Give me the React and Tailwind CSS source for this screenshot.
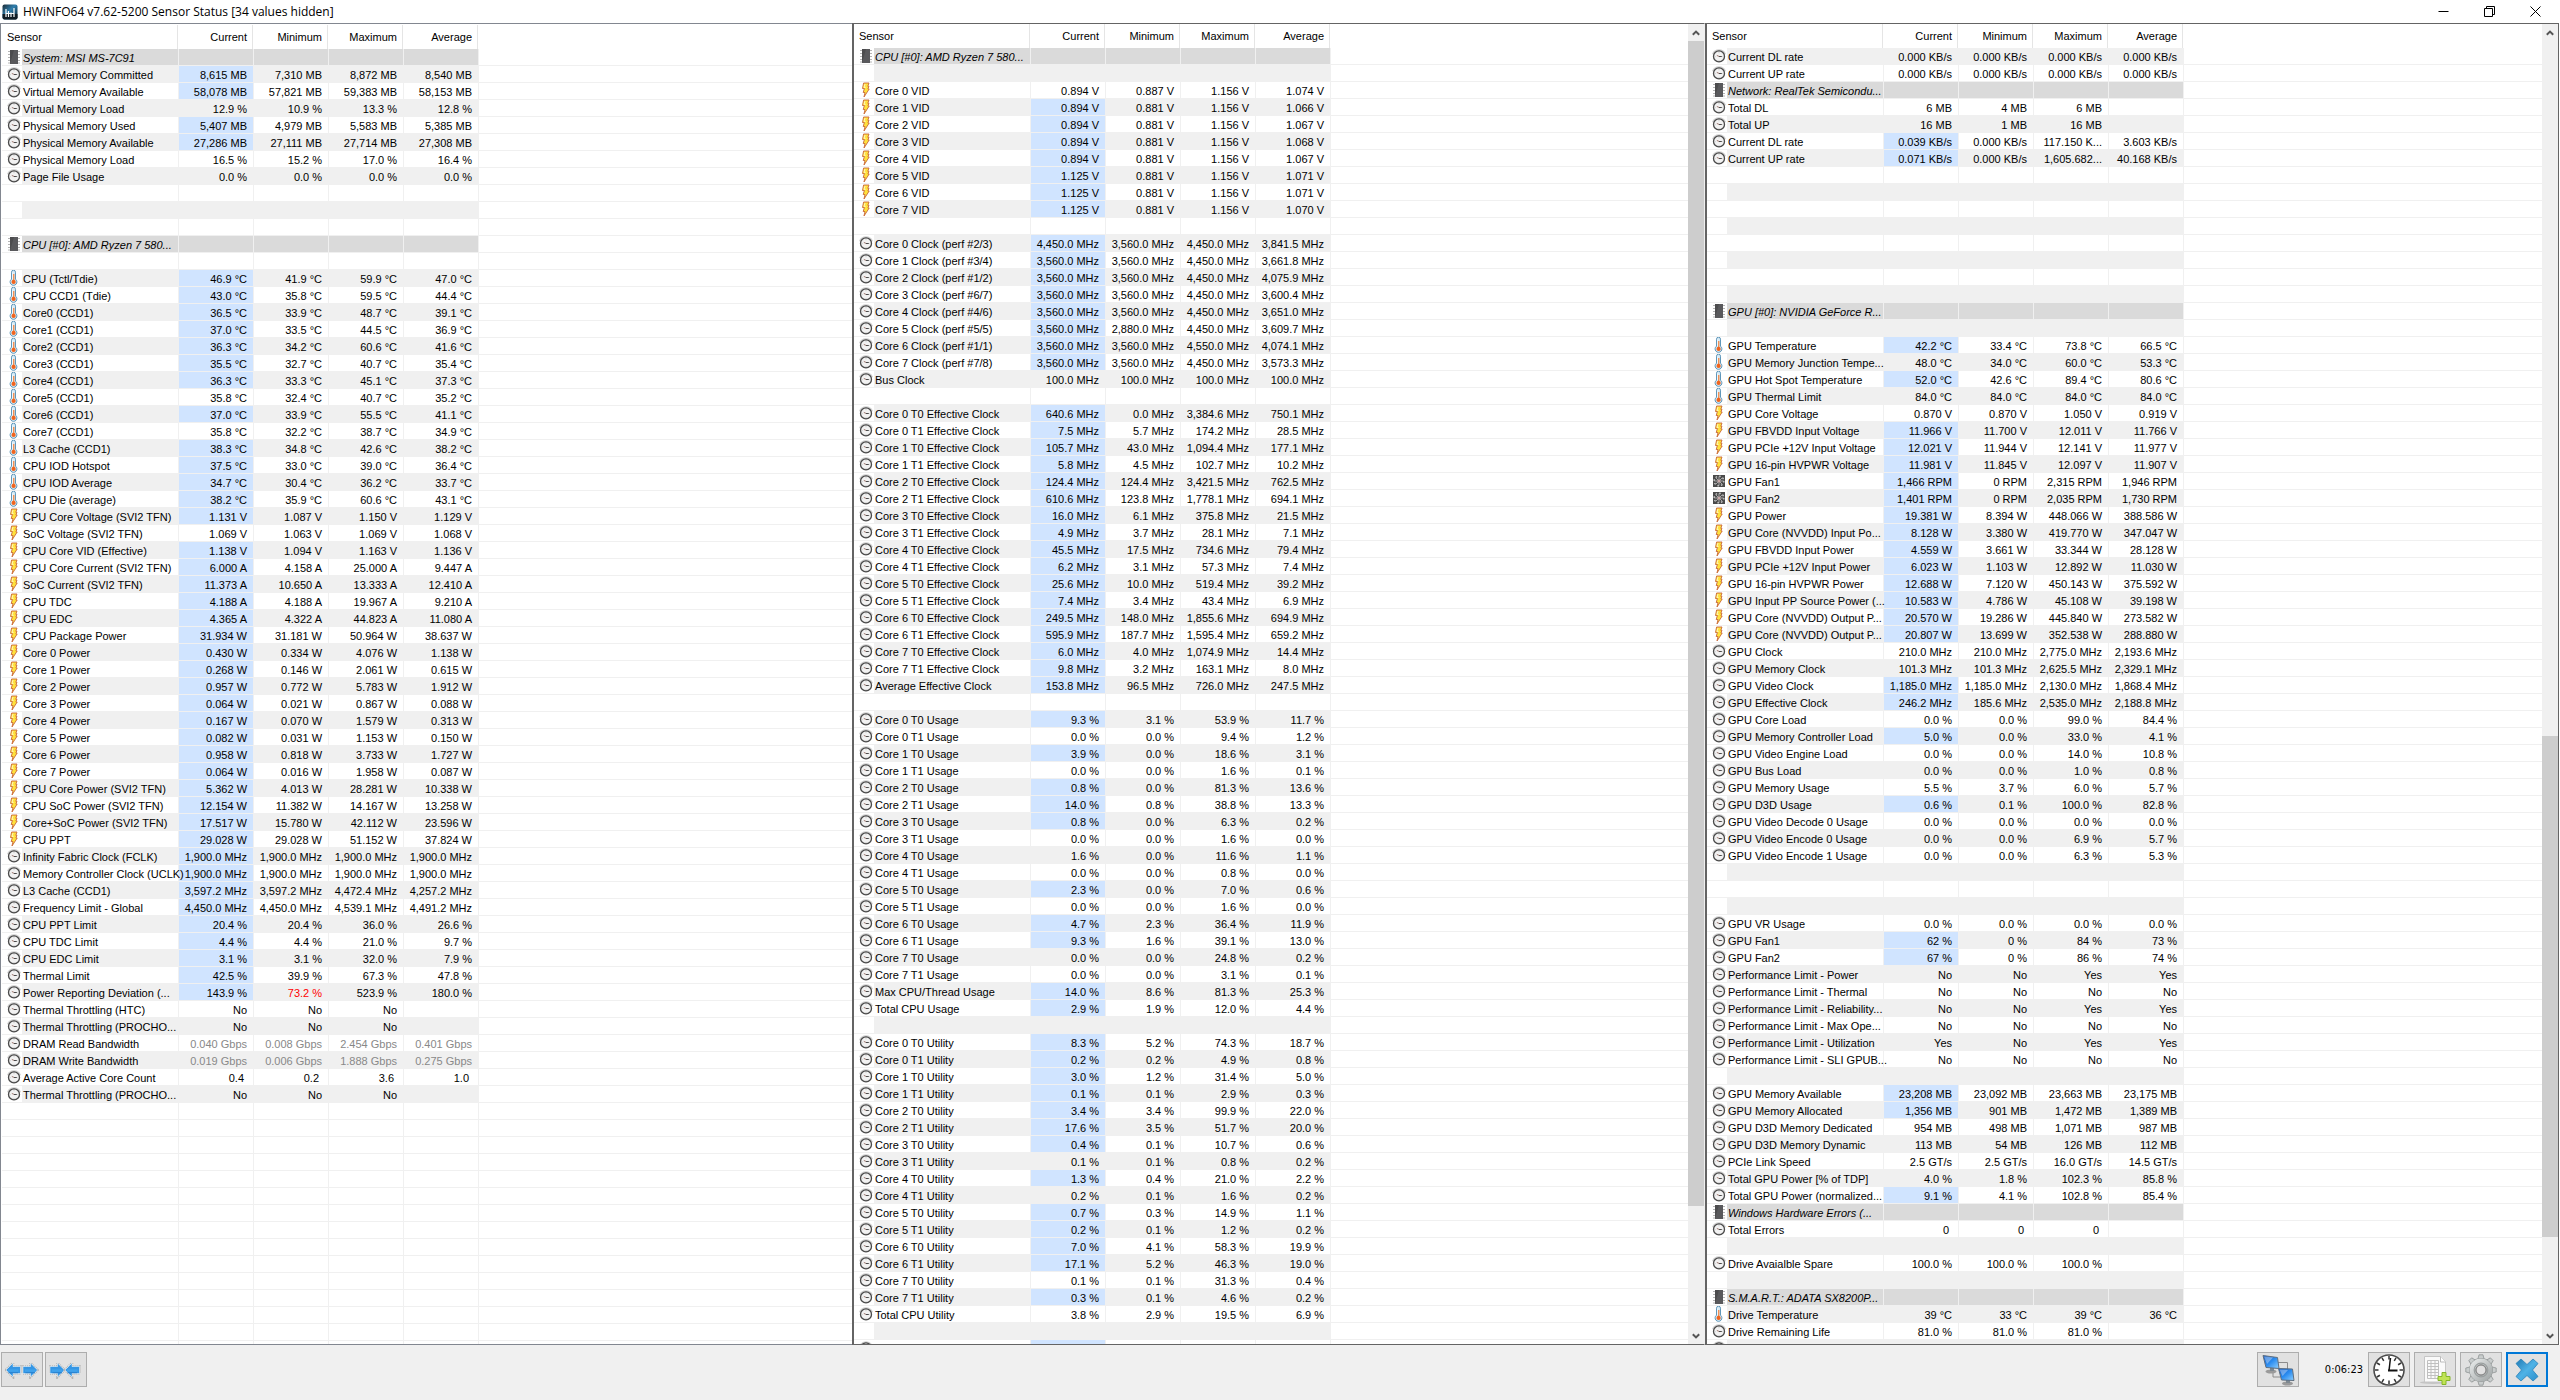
import React from "react";

const SYSTEM_PANE = `
#|System: MSI MS-7C91
c|Virtual Memory Committed|*8,615 MB|7,310 MB|8,872 MB|8,540 MB
c|Virtual Memory Available|*58,078 MB|57,821 MB|59,383 MB|58,153 MB
c|Virtual Memory Load|12.9 %|10.9 %|13.3 %|12.8 %
c|Physical Memory Used|*5,407 MB|4,979 MB|5,583 MB|5,385 MB
c|Physical Memory Available|*27,286 MB|27,111 MB|27,714 MB|27,308 MB
c|Physical Memory Load|16.5 %|15.2 %|17.0 %|16.4 %
c|Page File Usage|0.0 %|0.0 %|0.0 %|0.0 %
-
-
-
#|CPU [#0]: AMD Ryzen 7 580...
-
t|CPU (Tctl/Tdie)|*46.9 °C|41.9 °C|59.9 °C|47.0 °C
t|CPU CCD1 (Tdie)|*43.0 °C|35.8 °C|59.5 °C|44.4 °C
t|Core0 (CCD1)|*36.5 °C|33.9 °C|48.7 °C|39.1 °C
t|Core1 (CCD1)|*37.0 °C|33.5 °C|44.5 °C|36.9 °C
t|Core2 (CCD1)|*36.3 °C|34.2 °C|60.6 °C|41.6 °C
t|Core3 (CCD1)|*35.5 °C|32.7 °C|40.7 °C|35.4 °C
t|Core4 (CCD1)|*36.3 °C|33.3 °C|45.1 °C|37.3 °C
t|Core5 (CCD1)|35.8 °C|32.4 °C|40.7 °C|35.2 °C
t|Core6 (CCD1)|*37.0 °C|33.9 °C|55.5 °C|41.1 °C
t|Core7 (CCD1)|35.8 °C|32.2 °C|38.7 °C|34.9 °C
t|L3 Cache (CCD1)|*38.3 °C|34.8 °C|42.6 °C|38.2 °C
t|CPU IOD Hotspot|*37.5 °C|33.0 °C|39.0 °C|36.4 °C
t|CPU IOD Average|*34.7 °C|30.4 °C|36.2 °C|33.7 °C
t|CPU Die (average)|*38.2 °C|35.9 °C|60.6 °C|43.1 °C
v|CPU Core Voltage (SVI2 TFN)|*1.131 V|1.087 V|1.150 V|1.129 V
v|SoC Voltage (SVI2 TFN)|1.069 V|1.063 V|1.069 V|1.068 V
v|CPU Core VID (Effective)|*1.138 V|1.094 V|1.163 V|1.136 V
v|CPU Core Current (SVI2 TFN)|*6.000 A|4.158 A|25.000 A|9.447 A
v|SoC Current (SVI2 TFN)|*11.373 A|10.650 A|13.333 A|12.410 A
v|CPU TDC|*4.188 A|4.188 A|19.967 A|9.210 A
v|CPU EDC|*4.365 A|4.322 A|44.823 A|11.080 A
v|CPU Package Power|*31.934 W|31.181 W|50.964 W|38.637 W
v|Core 0 Power|*0.430 W|0.334 W|4.076 W|1.138 W
v|Core 1 Power|*0.268 W|0.146 W|2.061 W|0.615 W
v|Core 2 Power|*0.957 W|0.772 W|5.783 W|1.912 W
v|Core 3 Power|*0.064 W|0.021 W|0.867 W|0.088 W
v|Core 4 Power|*0.167 W|0.070 W|1.579 W|0.313 W
v|Core 5 Power|*0.082 W|0.031 W|1.153 W|0.150 W
v|Core 6 Power|*0.958 W|0.818 W|3.733 W|1.727 W
v|Core 7 Power|*0.064 W|0.016 W|1.958 W|0.087 W
v|CPU Core Power (SVI2 TFN)|*5.362 W|4.013 W|28.281 W|10.338 W
v|CPU SoC Power (SVI2 TFN)|*12.154 W|11.382 W|14.167 W|13.258 W
v|Core+SoC Power (SVI2 TFN)|*17.517 W|15.780 W|42.112 W|23.596 W
v|CPU PPT|*29.028 W|29.028 W|51.152 W|37.824 W
c|Infinity Fabric Clock (FCLK)|*1,900.0 MHz|1,900.0 MHz|1,900.0 MHz|1,900.0 MHz
c|Memory Controller Clock (UCLK)|*1,900.0 MHz|1,900.0 MHz|1,900.0 MHz|1,900.0 MHz
c|L3 Cache (CCD1)|*3,597.2 MHz|3,597.2 MHz|4,472.4 MHz|4,257.2 MHz
c|Frequency Limit - Global|*4,450.0 MHz|4,450.0 MHz|4,539.1 MHz|4,491.2 MHz
c|CPU PPT Limit|*20.4 %|20.4 %|36.0 %|26.6 %
c|CPU TDC Limit|*4.4 %|4.4 %|21.0 %|9.7 %
c|CPU EDC Limit|*3.1 %|3.1 %|32.0 %|7.9 %
c|Thermal Limit|*42.5 %|39.9 %|67.3 %|47.8 %
c|Power Reporting Deviation (...|*143.9 %|!73.2 %|523.9 %|180.0 %
c|Thermal Throttling (HTC)|No|No|No|
c|Thermal Throttling (PROCHO...|No|No|No|
c|DRAM Read Bandwidth|~0.040 Gbps|~0.008 Gbps|~2.454 Gbps|~0.401 Gbps
c|DRAM Write Bandwidth|~0.019 Gbps|~0.006 Gbps|~1.888 Gbps|~0.275 Gbps
c|Average Active Core Count|_0.4|_0.2|_3.6|_1.0
c|Thermal Throttling (PROCHO...|No|No|No|`;

const CPU_PANE = `
#|CPU [#0]: AMD Ryzen 7 580...
-
v|Core 0 VID|0.894 V|0.887 V|1.156 V|1.074 V
v|Core 1 VID|*0.894 V|0.881 V|1.156 V|1.066 V
v|Core 2 VID|*0.894 V|0.881 V|1.156 V|1.067 V
v|Core 3 VID|*0.894 V|0.881 V|1.156 V|1.068 V
v|Core 4 VID|*0.894 V|0.881 V|1.156 V|1.067 V
v|Core 5 VID|*1.125 V|0.881 V|1.156 V|1.071 V
v|Core 6 VID|*1.125 V|0.881 V|1.156 V|1.071 V
v|Core 7 VID|*1.125 V|0.881 V|1.156 V|1.070 V
-
c|Core 0 Clock (perf #2/3)|*4,450.0 MHz|3,560.0 MHz|4,450.0 MHz|3,841.5 MHz
c|Core 1 Clock (perf #3/4)|*3,560.0 MHz|3,560.0 MHz|4,450.0 MHz|3,661.8 MHz
c|Core 2 Clock (perf #1/2)|*3,560.0 MHz|3,560.0 MHz|4,450.0 MHz|4,075.9 MHz
c|Core 3 Clock (perf #6/7)|*3,560.0 MHz|3,560.0 MHz|4,450.0 MHz|3,600.4 MHz
c|Core 4 Clock (perf #4/6)|*3,560.0 MHz|3,560.0 MHz|4,450.0 MHz|3,651.0 MHz
c|Core 5 Clock (perf #5/5)|*3,560.0 MHz|2,880.0 MHz|4,450.0 MHz|3,609.7 MHz
c|Core 6 Clock (perf #1/1)|*3,560.0 MHz|3,560.0 MHz|4,550.0 MHz|4,074.1 MHz
c|Core 7 Clock (perf #7/8)|*3,560.0 MHz|3,560.0 MHz|4,450.0 MHz|3,573.3 MHz
c|Bus Clock|100.0 MHz|100.0 MHz|100.0 MHz|100.0 MHz
-
c|Core 0 T0 Effective Clock|*640.6 MHz|0.0 MHz|3,384.6 MHz|750.1 MHz
c|Core 0 T1 Effective Clock|*7.5 MHz|5.7 MHz|174.2 MHz|28.5 MHz
c|Core 1 T0 Effective Clock|*105.7 MHz|43.0 MHz|1,094.4 MHz|177.1 MHz
c|Core 1 T1 Effective Clock|*5.8 MHz|4.5 MHz|102.7 MHz|10.2 MHz
c|Core 2 T0 Effective Clock|*124.4 MHz|124.4 MHz|3,421.5 MHz|762.5 MHz
c|Core 2 T1 Effective Clock|*610.6 MHz|123.8 MHz|1,778.1 MHz|694.1 MHz
c|Core 3 T0 Effective Clock|*16.0 MHz|6.1 MHz|375.8 MHz|21.5 MHz
c|Core 3 T1 Effective Clock|*4.9 MHz|3.7 MHz|28.1 MHz|7.1 MHz
c|Core 4 T0 Effective Clock|*45.5 MHz|17.5 MHz|734.6 MHz|79.4 MHz
c|Core 4 T1 Effective Clock|*6.2 MHz|3.1 MHz|57.3 MHz|7.4 MHz
c|Core 5 T0 Effective Clock|*25.6 MHz|10.0 MHz|519.4 MHz|39.2 MHz
c|Core 5 T1 Effective Clock|*7.4 MHz|3.4 MHz|43.4 MHz|6.9 MHz
c|Core 6 T0 Effective Clock|*249.5 MHz|148.0 MHz|1,855.6 MHz|694.9 MHz
c|Core 6 T1 Effective Clock|*595.9 MHz|187.7 MHz|1,595.4 MHz|659.2 MHz
c|Core 7 T0 Effective Clock|*6.0 MHz|4.0 MHz|1,074.9 MHz|14.4 MHz
c|Core 7 T1 Effective Clock|*9.8 MHz|3.2 MHz|163.1 MHz|8.0 MHz
c|Average Effective Clock|*153.8 MHz|96.5 MHz|726.0 MHz|247.5 MHz
-
c|Core 0 T0 Usage|*9.3 %|3.1 %|53.9 %|11.7 %
c|Core 0 T1 Usage|0.0 %|0.0 %|9.4 %|1.2 %
c|Core 1 T0 Usage|*3.9 %|0.0 %|18.6 %|3.1 %
c|Core 1 T1 Usage|0.0 %|0.0 %|1.6 %|0.1 %
c|Core 2 T0 Usage|*0.8 %|0.0 %|81.3 %|13.6 %
c|Core 2 T1 Usage|*14.0 %|0.8 %|38.8 %|13.3 %
c|Core 3 T0 Usage|*0.8 %|0.0 %|6.3 %|0.2 %
c|Core 3 T1 Usage|0.0 %|0.0 %|1.6 %|0.0 %
c|Core 4 T0 Usage|1.6 %|0.0 %|11.6 %|1.1 %
c|Core 4 T1 Usage|0.0 %|0.0 %|0.8 %|0.0 %
c|Core 5 T0 Usage|*2.3 %|0.0 %|7.0 %|0.6 %
c|Core 5 T1 Usage|0.0 %|0.0 %|1.6 %|0.0 %
c|Core 6 T0 Usage|*4.7 %|2.3 %|36.4 %|11.9 %
c|Core 6 T1 Usage|*9.3 %|1.6 %|39.1 %|13.0 %
c|Core 7 T0 Usage|0.0 %|0.0 %|24.8 %|0.2 %
c|Core 7 T1 Usage|0.0 %|0.0 %|3.1 %|0.1 %
c|Max CPU/Thread Usage|*14.0 %|8.6 %|81.3 %|25.3 %
c|Total CPU Usage|*2.9 %|1.9 %|12.0 %|4.4 %
-
c|Core 0 T0 Utility|*8.3 %|5.2 %|74.3 %|18.7 %
c|Core 0 T1 Utility|*0.2 %|0.2 %|4.9 %|0.8 %
c|Core 1 T0 Utility|*3.0 %|1.2 %|31.4 %|5.0 %
c|Core 1 T1 Utility|*0.1 %|0.1 %|2.9 %|0.3 %
c|Core 2 T0 Utility|*3.4 %|3.4 %|99.9 %|22.0 %
c|Core 2 T1 Utility|*17.6 %|3.5 %|51.7 %|20.0 %
c|Core 3 T0 Utility|*0.4 %|0.1 %|10.7 %|0.6 %
c|Core 3 T1 Utility|0.1 %|0.1 %|0.8 %|0.2 %
c|Core 4 T0 Utility|*1.3 %|0.4 %|21.0 %|2.2 %
c|Core 4 T1 Utility|0.2 %|0.1 %|1.6 %|0.2 %
c|Core 5 T0 Utility|*0.7 %|0.3 %|14.9 %|1.1 %
c|Core 5 T1 Utility|*0.2 %|0.1 %|1.2 %|0.2 %
c|Core 6 T0 Utility|*7.0 %|4.1 %|58.3 %|19.9 %
c|Core 6 T1 Utility|*17.1 %|5.2 %|46.3 %|19.0 %
c|Core 7 T0 Utility|0.1 %|0.1 %|31.3 %|0.4 %
c|Core 7 T1 Utility|*0.3 %|0.1 %|4.6 %|0.2 %
c|Total CPU Utility|3.8 %|2.9 %|19.5 %|6.9 %
-
c||*|||`;

const GPU_PANE = `
c|Current DL rate|0.000 KB/s|0.000 KB/s|0.000 KB/s|0.000 KB/s
c|Current UP rate|0.000 KB/s|0.000 KB/s|0.000 KB/s|0.000 KB/s
#|Network: RealTek Semicondu...
c|Total DL|6 MB|4 MB|6 MB|
c|Total UP|16 MB|1 MB|16 MB|
c|Current DL rate|*0.039 KB/s|0.000 KB/s|117.150 K...|3.603 KB/s
c|Current UP rate|*0.071 KB/s|0.000 KB/s|1,605.682...|40.168 KB/s
-
-
-
-
-
-
-
-
#|GPU [#0]: NVIDIA GeForce R...
-
t|GPU Temperature|*42.2 °C|33.4 °C|73.8 °C|66.5 °C
t|GPU Memory Junction Tempe...|48.0 °C|34.0 °C|60.0 °C|53.3 °C
t|GPU Hot Spot Temperature|*52.0 °C|42.6 °C|89.4 °C|80.6 °C
t|GPU Thermal Limit|84.0 °C|84.0 °C|84.0 °C|84.0 °C
v|GPU Core Voltage|0.870 V|0.870 V|1.050 V|0.919 V
v|GPU FBVDD Input Voltage|*11.966 V|11.700 V|12.011 V|11.766 V
v|GPU PCIe +12V Input Voltage|*12.021 V|11.944 V|12.141 V|11.977 V
v|GPU 16-pin HVPWR Voltage|*11.981 V|11.845 V|12.097 V|11.907 V
f|GPU Fan1|*1,466 RPM|0 RPM|2,315 RPM|1,946 RPM
f|GPU Fan2|*1,401 RPM|0 RPM|2,035 RPM|1,730 RPM
v|GPU Power|*19.381 W|8.394 W|448.066 W|388.586 W
v|GPU Core (NVVDD) Input Po...|*8.128 W|3.380 W|419.770 W|347.047 W
v|GPU FBVDD Input Power|*4.559 W|3.661 W|33.344 W|28.128 W
v|GPU PCIe +12V Input Power|*6.023 W|1.103 W|12.892 W|11.030 W
v|GPU 16-pin HVPWR Power|*12.688 W|7.120 W|450.143 W|375.592 W
v|GPU Input PP Source Power (...|*10.583 W|4.786 W|45.108 W|39.198 W
v|GPU Core (NVVDD) Output P...|*20.570 W|19.286 W|445.840 W|273.582 W
v|GPU Core (NVVDD) Output P...|*20.807 W|13.699 W|352.538 W|288.880 W
c|GPU Clock|210.0 MHz|210.0 MHz|2,775.0 MHz|2,193.6 MHz
c|GPU Memory Clock|101.3 MHz|101.3 MHz|2,625.5 MHz|2,329.1 MHz
c|GPU Video Clock|*1,185.0 MHz|1,185.0 MHz|2,130.0 MHz|1,868.4 MHz
c|GPU Effective Clock|*246.2 MHz|185.6 MHz|2,535.0 MHz|2,188.8 MHz
c|GPU Core Load|0.0 %|0.0 %|99.0 %|84.4 %
c|GPU Memory Controller Load|*5.0 %|0.0 %|33.0 %|4.1 %
c|GPU Video Engine Load|0.0 %|0.0 %|14.0 %|10.8 %
c|GPU Bus Load|0.0 %|0.0 %|1.0 %|0.8 %
c|GPU Memory Usage|5.5 %|3.7 %|6.0 %|5.7 %
c|GPU D3D Usage|*0.6 %|0.1 %|100.0 %|82.8 %
c|GPU Video Decode 0 Usage|0.0 %|0.0 %|0.0 %|0.0 %
c|GPU Video Encode 0 Usage|0.0 %|0.0 %|6.9 %|5.7 %
c|GPU Video Encode 1 Usage|0.0 %|0.0 %|6.3 %|5.3 %
-
-
-
c|GPU VR Usage|0.0 %|0.0 %|0.0 %|0.0 %
c|GPU Fan1|*62 %|0 %|84 %|73 %
c|GPU Fan2|*67 %|0 %|86 %|74 %
c|Performance Limit - Power|No|No|Yes|Yes
c|Performance Limit - Thermal|No|No|No|No
c|Performance Limit - Reliability...|No|No|Yes|Yes
c|Performance Limit - Max Ope...|No|No|No|No
c|Performance Limit - Utilization|Yes|No|Yes|Yes
c|Performance Limit - SLI GPUB...|No|No|No|No
-
c|GPU Memory Available|*23,208 MB|23,092 MB|23,663 MB|23,175 MB
c|GPU Memory Allocated|*1,356 MB|901 MB|1,472 MB|1,389 MB
c|GPU D3D Memory Dedicated|954 MB|498 MB|1,071 MB|987 MB
c|GPU D3D Memory Dynamic|113 MB|54 MB|126 MB|112 MB
c|PCIe Link Speed|2.5 GT/s|2.5 GT/s|16.0 GT/s|14.5 GT/s
c|Total GPU Power [% of TDP]|4.0 %|1.8 %|102.3 %|85.8 %
c|Total GPU Power (normalized...|*9.1 %|4.1 %|102.8 %|85.4 %
#|Windows Hardware Errors (...
c|Total Errors|_0|_0|_0|
-
c|Drive Avaialble Spare|100.0 %|100.0 %|100.0 %|
-
#|S.M.A.R.T.: ADATA SX8200P...
t|Drive Temperature|39 °C|33 °C|39 °C|36 °C
c|Drive Remaining Life|81.0 %|81.0 %|81.0 %|
c|||||`;

const TOTAL_ROWS = 77;

function parseRows(source) {
  const rows = source.trim().split("\n").map((line) => {
    const [kind, name = "", ...values] = line.split("|");
    return { kind, name, values: [0, 1, 2, 3].map((i) => values[i] || "") };
  });
  const used = rows.length;
  while (rows.length < TOTAL_ROWS) rows.push({ kind: "-", name: "", values: ["", "", "", ""] });
  return { rows, used };
}

function ClockIcon() {
  return (
    <svg viewBox="0 0 16 16" className="block size-4" aria-hidden="true">
      <path d="M2.2 6.5A6.3 6.3 0 0 1 13.8 6.5" fill="none" stroke="#d0d0d0" strokeWidth="2.6" />
      <circle cx="8" cy="8.4" r="5.5" fill="#f2f2f2" stroke="#4a4a4a" strokeWidth="1.3" />
      <path d="M8 4.2v1M8 12v1M3.6 8.6h1M11.4 8.6h1" stroke="#bcbcbc" strokeWidth="0.8" />
      <path d="M5.8 7.4 8.2 8.5" stroke="#a07a72" strokeWidth="1" />
      <path d="M8 8.5h2.8" stroke="#4c4c4c" strokeWidth="1" />
    </svg>
  );
}

function ThermometerIcon() {
  return (
    <svg viewBox="0 0 16 16" className="block size-4" aria-hidden="true">
      <path d="M5.5 2.2a2 2 0 0 1 4 0v7a3.4 3.4 0 1 1-4 0z" fill="#d6eaf5" stroke="#5f97ba" strokeWidth="1" />
      <path d="M7 4h1.4v6H7z" fill="#f08a4a" />
      <circle cx="7.6" cy="11.9" r="2.1" fill="#f0641e" />
      <path d="M6.6 2.5v6.5" stroke="#fff" strokeWidth="0.7" />
    </svg>
  );
}

function BoltIcon() {
  return (
    <svg viewBox="0 0 16 16" className="block size-4" aria-hidden="true">
      <path d="M5.600 1H11L9.800 4.300H11L9.900 7h1.300L6 15 7 10.500H5.200L6.400 6.500H4.500z" fill="#ffe13c" stroke="#c8683a" strokeWidth="0.9" strokeLinejoin="miter" />
      <path d="M7 2 6 5.400h1.600" fill="none" stroke="#fff8c8" strokeWidth="0.9" />
    </svg>
  );
}

function ChipIcon() {
  return (
    <svg viewBox="0 0 16 16" className="block size-4" aria-hidden="true">
      <path d="M2 2.5h12M2 5.5h12M2 8.5h12M2 11.5h12M2 14h12" stroke="#b4b4b4" strokeWidth="1" />
      <rect x="4" y="1" width="8" height="14" fill="#4c4c4e" />
      <path d="M8 1h4v14H4z" fill="#636365" opacity="0.6" />
    </svg>
  );
}

function FanIcon() {
  return (
    <svg viewBox="0 0 16 16" className="block size-4" aria-hidden="true">
      <rect x="2" y="2" width="12" height="12" fill="#4a4a4a" />
      <circle cx="8" cy="8" r="4.8" fill="none" stroke="#c9c9c9" strokeWidth="1.4" strokeDasharray="1.6 2.1" />
      <path d="M4.6 4.6l6.8 6.8M11.4 4.6l-6.8 6.8M8 3.4v9.2M3.4 8h9.2" stroke="#b0b0b0" strokeWidth="0.9" />
      <circle cx="8" cy="8" r="1.5" fill="#c9a8a8" />
    </svg>
  );
}

const ICONS = { c: ClockIcon, t: ThermometerIcon, v: BoltIcon, "#": ChipIcon, f: FanIcon };

function ValueCell({ value, fill }) {
  const flag = "*!~_".includes(value[0]) ? value[0] : "";
  const text = flag ? value.slice(1) : value;
  const background = flag === "*" ? "bg-[#d0e4ff]" : fill;
  const color = flag === "!" ? "text-[#ff0000]" : flag === "~" ? "text-[#888888]" : "text-black";
  const padding = flag === "_" ? "pr-[9px]" : "pr-[6px]";
  return (
    <td className={`border-r border-b border-[#f0f0f0] pt-[2px] pb-0 pl-0 text-right ${background} ${color} ${padding}`}>{text}</td>
  );
}

function SensorRow({ row, striped }) {
  const Icon = ICONS[row.kind];
  const section = row.kind === "#";
  const fill = section ? "bg-[#dadada]" : striped ? "bg-[#f0f0f0]" : "bg-white";
  return (
    <tr className="h-[17px]">
      <td className="border-b border-[#f0f0f0] p-0 pl-1">{Icon ? <Icon /> : null}</td>
      <td className={`border-r border-b border-[#f0f0f0] pt-[2px] pr-0 pb-0 pl-px ${fill} ${section ? "italic" : ""}`}>{row.name}</td>
      {row.values.map((value, i) => (
        <ValueCell key={i} value={value} fill={fill} />
      ))}
      <td className="border-b border-[#f0f0f0] p-0" />
    </tr>
  );
}

function HeaderCell({ children, span }) {
  return (
    <th scope="col" colSpan={span || 1} className="p-0 pr-px font-normal">
      <div className={`h-6 border-r border-[#e5e5e5] leading-6 ${span ? "pl-[5px] text-left" : "pr-[5px] text-right"}`}>
        {children}
      </div>
    </th>
  );
}

function SensorTable({ source, stripe }) {
  const { rows, used } = parseRows(source);
  return (
    <table className="w-full table-fixed border-separate border-spacing-0 font-['Liberation_Sans',sans-serif] text-[11px] leading-[14px] whitespace-nowrap text-black">
      <colgroup>
        <col className="w-[20px]" />
        <col className="w-[157px]" />
        <col className="w-[75px]" />
        <col className="w-[75px]" />
        <col className="w-[75px]" />
        <col className="w-[75px]" />
        <col />
      </colgroup>
      <thead>
        <tr>
          <HeaderCell span={2}>Sensor</HeaderCell>
          <HeaderCell>Current</HeaderCell>
          <HeaderCell>Minimum</HeaderCell>
          <HeaderCell>Maximum</HeaderCell>
          <HeaderCell>Average</HeaderCell>
          <td />
        </tr>
      </thead>
      <tbody>
        {rows.map((row, i) => (
          <SensorRow key={i} row={row} striped={i < used && i % 2 === stripe} />
        ))}
      </tbody>
    </table>
  );
}

function Chevron({ up }) {
  return (
    <svg viewBox="0 0 8 8" className="size-2" aria-hidden="true">
      <path d={up ? "M0.8 5.8 4 2.6 7.2 5.8" : "M0.8 2.2 4 5.4 7.2 2.2"} fill="none" stroke="#555" strokeWidth="2" />
    </svg>
  );
}

function ScrollBar({ before, thumb, after }) {
  return (
    <div className="flex w-4 shrink-0 flex-col bg-[#f0f0f0]">
      <button type="button" aria-label="Scroll up" className="flex h-[17px] items-center justify-center">
        <Chevron up />
      </button>
      <div className="flex flex-1 flex-col">
        <div style={{ flexGrow: before }} />
        <div className="bg-[#cdcdcd]" style={{ flexGrow: thumb }} />
        <div style={{ flexGrow: after }} />
      </div>
      <button type="button" aria-label="Scroll down" className="flex h-[17px] items-center justify-center">
        <Chevron />
      </button>
    </div>
  );
}

function ToolButton({ label, primary, children }) {
  return (
    <button
      type="button"
      aria-label={label}
      className={`flex h-[35px] w-[42px] items-center justify-center bg-[#e1e1e1] ${primary ? "border-2 border-[#0078d7]" : "border border-[#adadad]"}`}
    >
      {children}
    </button>
  );
}

const LEFT_ARROW = "M0 8 7 1V4.500H14.500V11.500H7V15z";
const RIGHT_ARROW = "M14.500 8 7.500 1V4.500H0V11.500H7.500V15z";

function ArrowPair({ first, second, gap }) {
  return (
    <svg viewBox="0 0 34 18" className="h-[18px] w-[34px]" aria-hidden="true">
      {[[first, 1], [second, 16 + gap]].map(([path, x], i) => (
        <g key={i} transform={`translate(${x} 1)`}>
          <path d={path} fill="none" stroke="#b4b4b4" strokeWidth="2.600" strokeDasharray="1 1" />
          <path d={path} fill="#3596e4" stroke="#fafcff" strokeWidth="0.500" />
          <path d="M2 8.600h10.500" stroke="#3fa2ec" strokeWidth="2.500" />
          <path d="M2.500 10.700h9.500" stroke="#2b80cc" strokeWidth="1" />
        </g>
      ))}
    </svg>
  );
}

function NetworkIcon() {
  return (
    <svg viewBox="0 0 34 32" className="h-8 w-[34px]" aria-hidden="true">
      <defs>
        <linearGradient id="screen" x1="0" y1="0" x2="1" y2="1">
          <stop offset="0" stopColor="#0b55c4" />
          <stop offset="0.5" stopColor="#2b8cf0" />
          <stop offset="1" stopColor="#8fd0ff" />
        </linearGradient>
      </defs>
      <path d="M17 8.500h9.500v8M12 16v7h7" fill="none" stroke="#8c8c8c" />
      <ellipse cx="10" cy="17.500" rx="5.500" ry="2" fill="#9a9a9a" />
      <path d="M9 13h4v4H9z" fill="#7e8890" />
      <path d="M2 1.500 16.500 3.500 18 14.500 5 13.500z" fill="url(#screen)" stroke="#5f6f80" />
      <path d="M3 2.500 12 3.500 6 10z" fill="#fff" opacity="0.35" />
      <ellipse cx="26.500" cy="29.500" rx="5.500" ry="2" fill="#9a9a9a" />
      <path d="M25 25h4v4h-4z" fill="#7e8890" />
      <path d="M17.500 14.500 31.500 15 33 26.500 20.500 26z" fill="url(#screen)" stroke="#5f6f80" />
      <path d="M18.500 15.500 27 16 21.500 22z" fill="#fff" opacity="0.35" />
    </svg>
  );
}

function WallClockIcon() {
  return (
    <svg viewBox="0 0 32 32" className="size-8" aria-hidden="true">
      <circle cx="16" cy="16" r="15" fill="#fff" stroke="#4b4b4b" strokeWidth="1.6" />
      {[0, 30, 60, 90, 120, 150, 180, 210, 240, 270, 300, 330].map((angle) => (
        <path key={angle} d="M16 2v3.500" stroke="#333" strokeWidth="1.500" transform={`rotate(${angle} 16 16)`} />
      ))}
      <path d="M17.500 4 16 16.500" stroke="#111" strokeWidth="1.500" />
      <path d="M15 16.500h9.500" stroke="#111" strokeWidth="2" />
    </svg>
  );
}

function SheetIcon() {
  return (
    <svg viewBox="0 0 32 32" className="size-8" aria-hidden="true">
      <ellipse cx="14" cy="28.500" rx="13" ry="1.500" fill="#c4c4c4" />
      <path d="M5.500 2.500h16l5 5v20.500h-21z" fill="#fafafa" stroke="#c6c6c6" />
      <path d="M21.500 2.500v5.500h5" fill="#fff" stroke="#bbb" />
      <path d="M8.500 6.500h11v18h-11zM8.500 9.500h11M8.500 12.500h11M8.500 15.500h11M8.500 18.500h11M8.500 21.500h11M12 6.500v18M16 6.500v18" fill="none" stroke="#c0c0c0" />
      <path d="M23 18.500h4v4h4v4h-4v4h-4v-4h-4v-4h4z" fill="#c0e355" stroke="#84b52a" />
    </svg>
  );
}

function GearIcon() {
  return (
    <svg viewBox="0 0 32 32" className="size-8" aria-hidden="true">
      <defs>
        <linearGradient id="steel" x1="0" y1="0" x2="1" y2="1">
          <stop offset="0" stopColor="#e3e6e6" />
          <stop offset="1" stopColor="#a6abab" />
        </linearGradient>
      </defs>
      {[0, 45, 90, 135, 180, 225, 270, 315].map((angle) => (
        <path key={angle} d="M12.500 7 14 0.800h4L19.500 7z" fill="#c9cdcd" stroke="#8f9494" strokeWidth="0.8" transform={`rotate(${angle} 16 16)`} />
      ))}
      <circle cx="16" cy="16" r="8.600" fill="none" stroke="#8f9494" strokeWidth="6.600" />
      <circle cx="16" cy="16" r="8.600" fill="none" stroke="url(#steel)" strokeWidth="5.800" />
      <circle cx="16" cy="16" r="6.800" fill="none" stroke="#9a9f9f" strokeWidth="1.200" />
      <circle cx="16" cy="16" r="5" fill="#e1e1e1" stroke="#777" strokeWidth="1" />
    </svg>
  );
}

function CrossIcon() {
  return (
    <svg viewBox="0 0 24 24" className="size-6" aria-hidden="true">
      <defs>
        <linearGradient id="cross" x1="0" y1="0" x2="1" y2="1">
          <stop offset="0" stopColor="#1f7ab4" />
          <stop offset="0.5" stopColor="#4fb2e6" />
          <stop offset="1" stopColor="#2c8fcb" />
        </linearGradient>
      </defs>
      <path d="M6 1 12 6.500 18 1 23 5.500 17.500 12 23 18.500 18 23 12 17.500 6 23 1 18.500 6.500 12 1 5.500z" fill="url(#cross)" stroke="#2b83ba" strokeWidth="0.8" strokeLinejoin="round" />
    </svg>
  );
}

function AppIcon() {
  return (
    <svg viewBox="0 0 16 16" className="size-4" aria-hidden="true">
      <defs>
        <linearGradient id="logo" x1="0" y1="0" x2="1" y2="1">
          <stop offset="0" stopColor="#1d2a33" />
          <stop offset="0.45" stopColor="#2f7fae" />
          <stop offset="1" stopColor="#0a141b" />
        </linearGradient>
      </defs>
      <rect x="0.500" y="0.500" width="15" height="15" rx="2" fill="url(#logo)" />
      <path d="M0.500 10h15v3.500a2 2 0 0 1-2 2h-11a2 2 0 0 1-2-2z" fill="#101c24" />
      <path d="M4 5v8M6.500 7v6M9 8.500V13M12 4v9M4 9.500h8" stroke="#fff" strokeWidth="1.200" />
    </svg>
  );
}

function CaptionButton({ label, path }) {
  return (
    <button type="button" aria-label={label} className="flex h-[21px] w-[46px] items-center justify-center">
      <svg viewBox="0 0 11 11" className="size-[11px]" aria-hidden="true">
        <path d={path} fill="none" stroke="#000" strokeWidth="1" />
      </svg>
    </button>
  );
}

export default function App() {
  return (
    <div className="flex h-screen flex-col overflow-hidden bg-white font-['Open_Sans',sans-serif]">
      <header className="flex h-[23px] shrink-0 items-center pr-[2px] pl-[2px]">
        <AppIcon />
        <h1 className="ml-[5px] flex-1 text-[12px] leading-4 text-black">
          HWiNFO64 v7.62-5200 Sensor Status [34 values hidden]
        </h1>
        <CaptionButton label="Minimize" path="M0.500 5.500h10" />
        <CaptionButton label="Restore" path="M0.500 2.500h8v8h-8zM2.500 2.500v-2h8v8h-2" />
        <CaptionButton label="Close" path="M0.500 0.500l10 10M10.500 0.500l-10 10" />
      </header>

      <main className="grid min-h-0 flex-1 grid-cols-[852fr_853fr_855fr]">
        <section className="min-w-0 overflow-hidden border border-r-0 border-[#828790] pt-px pl-px">
          <SensorTable source={SYSTEM_PANE} stripe={1} />
        </section>
        <section className="flex min-w-0 overflow-hidden border-t border-r border-b border-l-2 border-[#646464] border-r-[#f0f0f0]">
          <div className="min-w-0 flex-1 overflow-hidden">
            <SensorTable source={CPU_PANE} stripe={1} />
          </div>
          <ScrollBar before={0} thumb={1164} after={121} />
        </section>
        <section className="mr-px flex min-w-0 overflow-hidden border-t border-r border-b border-l-2 border-[#646464]">
          <div className="min-w-0 flex-1 overflow-hidden">
            <SensorTable source={GPU_PANE} stripe={0} />
          </div>
          <ScrollBar before={694} thumb={501} after={90} />
        </section>
      </main>

      <footer className="flex h-[55px] shrink-0 items-start justify-between bg-[#f0f0f0] pt-[7px] pr-3 pl-px">
        <div className="flex gap-[2px]">
          <ToolButton label="Expand columns">
            <ArrowPair first={LEFT_ARROW} second={RIGHT_ARROW} gap={2} />
          </ToolButton>
          <ToolButton label="Shrink columns">
            <ArrowPair first={RIGHT_ARROW} second={LEFT_ARROW} gap={0} />
          </ToolButton>
        </div>
        <div className="flex items-center gap-1">
          <ToolButton label="Remote monitoring">
            <NetworkIcon />
          </ToolButton>
          <time className="w-[61px] pr-px text-right font-['DejaVu_Sans_Condensed','Open_Sans',sans-serif] text-[11px] leading-4 text-black">0:06:23</time>
          <ToolButton label="Reset clock">
            <WallClockIcon />
          </ToolButton>
          <ToolButton label="Start logging">
            <SheetIcon />
          </ToolButton>
          <ToolButton label="Settings">
            <GearIcon />
          </ToolButton>
          <ToolButton label="Close sensors" primary>
            <CrossIcon />
          </ToolButton>
        </div>
      </footer>
    </div>
  );
}
